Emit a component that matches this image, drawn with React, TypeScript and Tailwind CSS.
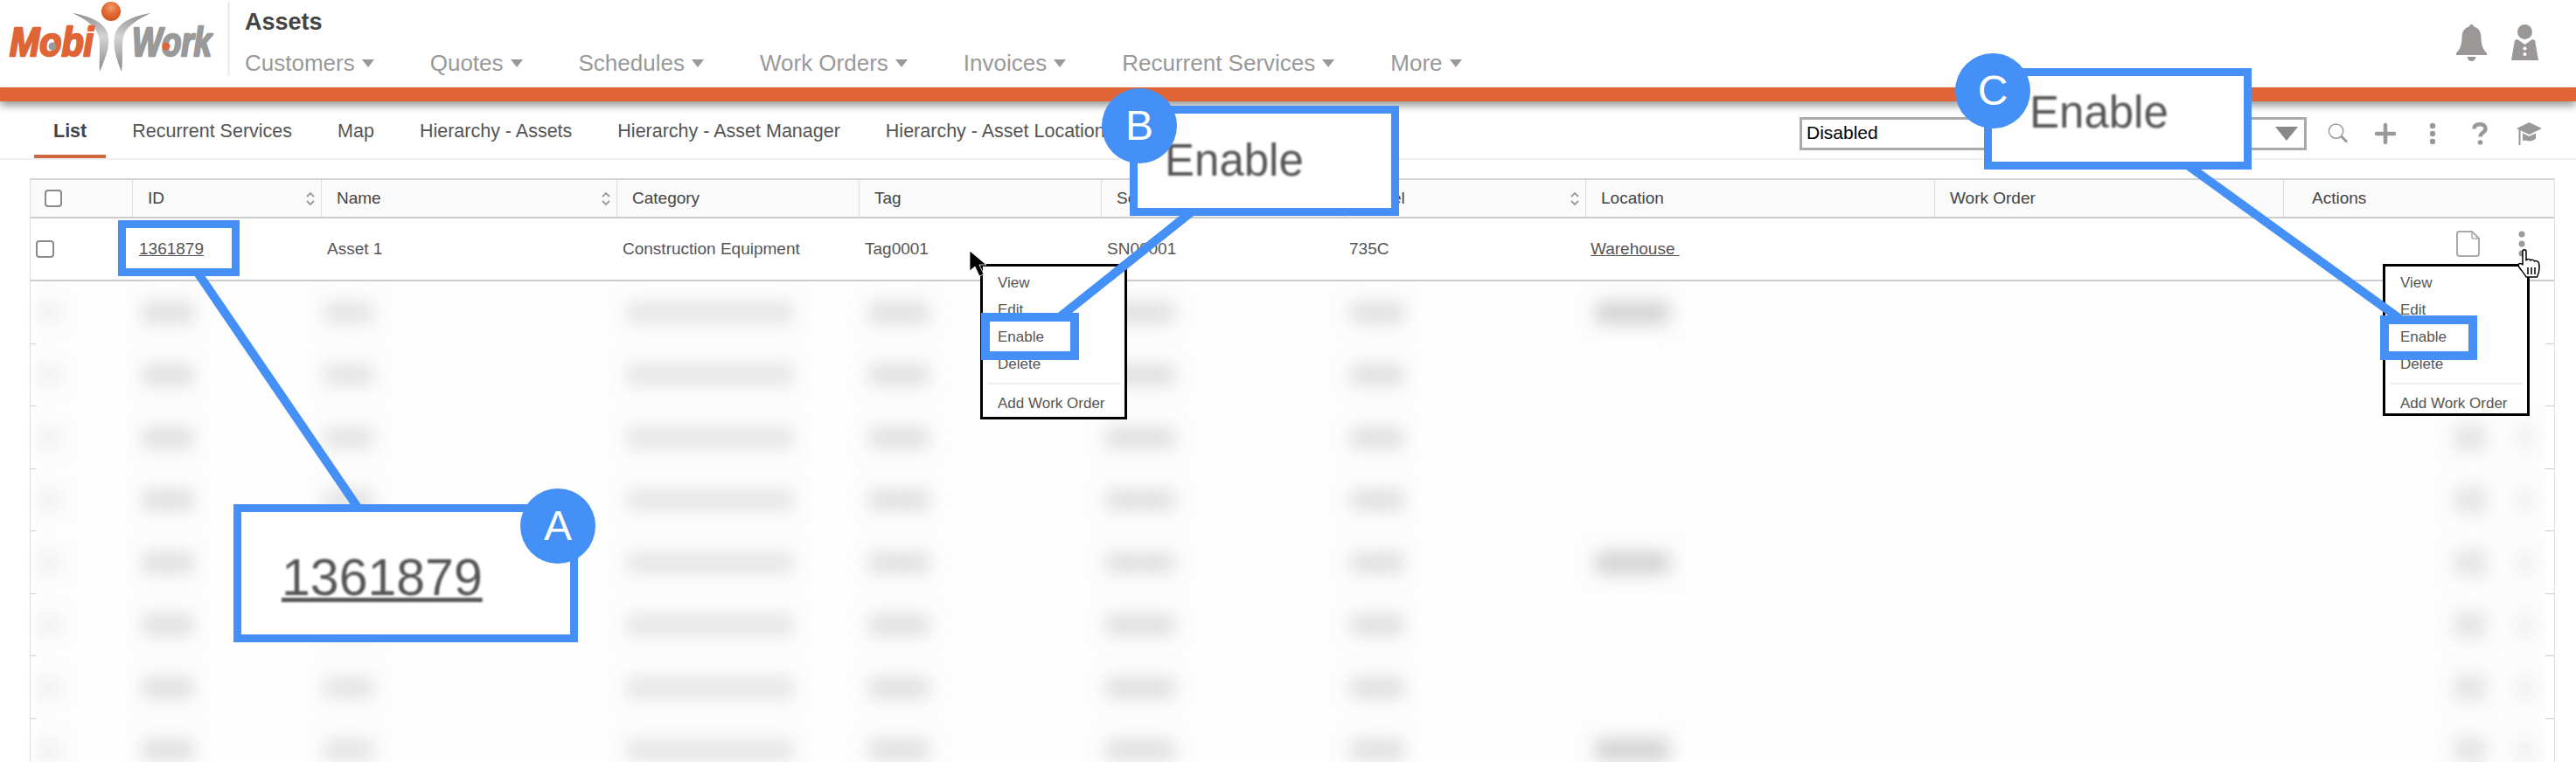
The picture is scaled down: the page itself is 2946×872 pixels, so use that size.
import { ReactNode } from "react";

const navItems = ["Customers", "Quotes", "Schedules", "Work Orders", "Invoices", "Recurrent Services", "More"];
const tabs = ["Recurrent Services", "Map", "Hierarchy - Assets", "Hierarchy - Asset Manager", "Hierarchy - Asset Location"];
const headers = [
  { label: "ID", sort: true },
  { label: "Name", sort: true },
  { label: "Category" },
  { label: "Tag" },
  { label: "Serial" },
  { label: "Model", sort: true },
  { label: "Location" },
  { label: "Work Order" },
];
// blurred rows below the first one
const blurRows = [
  { location: true, actions: false },
  { location: false, actions: false },
  { location: false, actions: true },
  { location: false, actions: true },
  { location: true, actions: true },
  { location: false, actions: true },
  { location: false, actions: true },
  { location: true, actions: true },
];
const menuItems = ["View", "Edit", "Enable", "Delete"];

function Logo() {
  return (
    <svg width="260" height="95" viewBox="0 0 260 95" className="shrink-0">
      <defs>
        <radialGradient id="ball" cx="0.5" cy="0.3" r="0.7">
          <stop offset="0" stopColor="#f29a6c" />
          <stop offset="0.55" stopColor="#e2672f" />
          <stop offset="1" stopColor="#cf5520" />
        </radialGradient>
        <linearGradient id="swoosh" x1="0" y1="0" x2="0" y2="1">
          <stop offset="0" stopColor="#8f8f8f" />
          <stop offset="0.4" stopColor="#d4d4d4" />
          <stop offset="1" stopColor="#8a8a8a" />
        </linearGradient>
      </defs>
      <path d="M83 15C100 18 118 24 123 38C127 52 120 68 114 82C113 66 115 50 113 42C110 30 98 22 83 15Z" fill="url(#swoosh)" />
      <path d="M172 15C155 18 137 24 132 38C128 52 133 68 139 82C141 66 139 50 141 42C144 30 158 22 172 15Z" fill="url(#swoosh)" />
      <circle cx="127" cy="13" r="11" fill="url(#ball)" />
      <text x="11" y="64" fontSize="46" fontWeight="700" fontStyle="italic" fill="#df6436" stroke="#df6436" strokeWidth="2.5" strokeLinejoin="round" textLength="96" lengthAdjust="spacingAndGlyphs">Mobi</text>
      <circle cx="60" cy="53" r="4.5" fill="#999" />
      <text x="151" y="64" fontSize="46" fontWeight="700" fontStyle="italic" fill="#999" stroke="#999" strokeWidth="2.5" strokeLinejoin="round" textLength="91" lengthAdjust="spacingAndGlyphs">Work</text>
      <circle cx="190" cy="53" r="4.5" fill="#df6436" />
    </svg>
  );
}

function Caret() {
  return <span className="ml-[8px] inline-block h-0 w-0 border-x-[7.5px] border-t-[9px] border-x-transparent border-t-[#999]" />;
}

function SortIcon() {
  return (
    <svg width="12" height="17" viewBox="0 0 12 17" fill="none" stroke="#999" strokeWidth="1.8">
      <path d="M2 6l4-4 4 4" />
      <path d="M2 11l4 4 4-4" />
    </svg>
  );
}

function Checkbox({ className }: { className: string }) {
  return <div className={`rounded-[4px] border-2 border-[#8a8a8a] bg-white ${className}`} />;
}

function Bell() {
  return (
    <svg width="35" height="42" viewBox="0 0 35 42" fill="#9b9797">
      <path d="M17.5 0c1.6 0 2.6 1 2.8 2.6C26 4 28.500 9 28.500 15c0 8 2 13 6.500 18v2H0v-2c4.500-5 6.500-10 6.500-18 0-6 2.500-11 8.200-12.400C14.900 1 15.900 0 17.500 0z" />
      <path d="M12.500 37h10c-.5 3-2.500 5-5 5s-4.500-2-5-5z" />
    </svg>
  );
}

function Person() {
  return (
    <svg width="31" height="41" viewBox="0 0 31 41" fill="#9b9797">
      <circle cx="15.500" cy="8.500" r="8.500" />
      <path d="M7 17l8.500 6L24 17l3 1 4 23H0l4-23z" />
      <circle cx="15.500" cy="27.500" r="2" fill="#fff" />
      <circle cx="15.500" cy="34" r="2" fill="#fff" />
    </svg>
  );
}

function ToolIcon({ width, children }: { width: string; children: ReactNode }) {
  return <div className={`flex h-[28px] items-center justify-center ${width}`}>{children}</div>;
}

function HeaderBar() {
  return (
    <header className="flex h-[100px] bg-white">
      <Logo />
      <div className="mt-[2px] h-[85px] w-[3px] bg-[#f0f0f0]" />
      <div className="pl-[17px]">
        <h1 className="mt-[10px] text-[27px] leading-[30px] font-bold text-[#444]">Assets</h1>
        <nav className="mt-[17px] flex gap-[64px]">
          {navItems.map((item) => (
            <div key={item} className="flex items-center text-[26px] leading-[30px] text-[#999]">
              {item}
              <Caret />
            </div>
          ))}
        </nav>
      </div>
      <div className="ml-auto flex gap-[28px] pt-[28px] pr-[43px]">
        <Bell />
        <Person />
      </div>
    </header>
  );
}

function TabBar() {
  return (
    <div className="flex h-[67px] border-b-2 border-[#eee] pl-[39px]">
      <div className="flex h-[65px] gap-[8px]">
        <div className="flex items-center border-b-4 border-[#d0663f] px-[22px] pt-[8px] text-[21.5px] font-bold text-[#444]">List</div>
        {tabs.map((tab) => (
          <div key={tab} className="flex items-center whitespace-nowrap border-b-4 border-transparent px-[22px] pt-[8px] text-[21.5px] text-[#555]">
            {tab}
          </div>
        ))}
      </div>
      <div className="ml-auto flex items-center gap-[30px] pt-[8px] pr-[39px]">
        <div className="mr-[-6px] flex h-[38px] w-[580px] items-center justify-between border-[3px] border-[#aaa] pr-[7px] pl-[5px] text-[21px] leading-none text-black">
          <span className="pb-[2px]">Disabled</span>
          <span className="h-0 w-0 border-x-[13px] border-t-[16px] border-x-transparent border-t-[#888]" />
        </div>
        <ToolIcon width="w-[24px]">
          <svg width="25" height="25" viewBox="0 0 25 25" fill="none" stroke="#999">
            <circle cx="10" cy="10" r="8.500" strokeWidth="1.5" />
            <path d="M16 16l7 7" strokeWidth="3" />
          </svg>
        </ToolIcon>
        <ToolIcon width="w-[24px]">
          <svg width="24" height="24" viewBox="0 0 24 24" fill="none" stroke="#999" strokeWidth="4.500" strokeLinecap="round">
            <path d="M12 2v20M2 12h20" />
          </svg>
        </ToolIcon>
        <ToolIcon width="w-[24px]">
          <svg width="8" height="26" viewBox="0 0 8 26" fill="#999">
            <circle cx="4" cy="4" r="3.200" />
            <circle cx="4" cy="13" r="3.200" />
            <circle cx="4" cy="22" r="3.200" />
          </svg>
        </ToolIcon>
        <ToolIcon width="w-[24px]">
          <svg width="18" height="26" viewBox="0 0 18 26" fill="none" stroke="#999" strokeWidth="4.500">
            <path d="M2.500 7.500C2.500 4 5 2.200 9 2.200s6.500 2.100 6.500 5c0 4.500-6 4.500-6 9.300" />
            <circle cx="9.500" cy="23" r="2.800" fill="#999" stroke="none" />
          </svg>
        </ToolIcon>
        <ToolIcon width="w-[29px]">
          <svg width="29" height="26" viewBox="0 0 29 26" fill="#999">
            <path d="M14.500 0L29 7l-14.500 7L0 7z" />
            <path d="M7 12.500l7.500 3.500 7.500-3.500v6c-2 2-4.500 3-7.500 3-1.500 0-3-.3-4.500-1l-3 .5z" />
            <path d="M2.500 8h2v18h-2z" />
          </svg>
        </ToolIcon>
      </div>
    </div>
  );
}

function TableHeader() {
  return (
    <div className="grid h-[46px] grid-cols-[116px_216px_338px_277px_277px_278px_276px_399px_399px_1fr] border-y-2 border-t-[#d4d4d4] border-b-[#ccc] bg-[#fafafa] text-[19px] text-[#444]">
      <div className="flex items-center pl-[16px]">
        <Checkbox className="h-[20px] w-[20px]" />
      </div>
      {headers.map((h) => (
        <div key={h.label} className="flex items-center justify-between border-l border-[#ddd] pr-[6px] pl-[17px]">
          {h.label}
          {h.sort && <SortIcon />}
        </div>
      ))}
      <div className="flex items-center border-l border-[#ddd] pl-[32px]">Actions</div>
    </div>
  );
}

function FirstRow() {
  return (
    <div className="grid h-[72px] grid-cols-[116px_216px_338px_277px_277px_278px_276px_399px_399px_1fr] items-center border-b-2 border-[#ccc] text-[19px] text-[#555]">
      <div className="pl-[6px]">
        <Checkbox className="h-[20px] w-[21px]" />
      </div>
      <div className="pl-[8px] underline">1361879</div>
      <div className="pl-[7px]">Asset 1</div>
      <div className="pl-[7px]">Construction Equipment</div>
      <div className="pl-[7px]">Tag0001</div>
      <div className="pl-[7px]">SN00001</div>
      <div className="pl-[6px]">735C</div>
      <div className="pl-[6px] whitespace-pre underline">Warehouse </div>
      <div />
      <div className="flex items-center pb-[13px] pl-[198px]">
        <svg width="27" height="30" viewBox="0 0 27 30" fill="none" stroke="#aaa" strokeWidth="2">
          <path d="M3 1h15l8 8v17a3 3 0 0 1-3 3H4a3 3 0 0 1-3-3V3a2 2 0 0 1 2-2z" />
          <path d="M18 1v6a2 2 0 0 0 2 2h6" strokeWidth="1.500" />
        </svg>
        <svg width="8" height="30" viewBox="0 0 8 30" fill="#999" className="ml-[44px]">
          <circle cx="4" cy="4" r="3.500" />
          <circle cx="4" cy="15" r="3.500" />
          <circle cx="4" cy="26" r="3.500" />
        </svg>
      </div>
    </div>
  );
}

function BlurRow({ location, actions }: { location: boolean; actions: boolean }) {
  return (
    <div className="flex h-[71.5px]">
      <div className="w-[6px] border-b border-[#ccc]" />
      <div className="grid flex-1 grid-cols-[110px_216px_338px_277px_277px_278px_276px_399px_399px_1fr] items-center bg-[#fdfdfd]">
        <div className="ml-[2px] h-[20px] w-[26px] bg-[#eeeeee] blur-[10px]" />
        <div className="ml-[12px] h-[22px] w-[58px] bg-[#dcdcdc] blur-[10px]" />
        <div className="ml-[4px] h-[22px] w-[56px] bg-[#e0e0e0] blur-[10px]" />
        <div className="ml-[12px] h-[22px] w-[190px] bg-[#e2e2e2] blur-[10px]" />
        <div className="ml-[12px] h-[22px] w-[68px] bg-[#dcdcdc] blur-[10px]" />
        <div className="ml-[6px] h-[22px] w-[78px] bg-[#dcdcdc] blur-[10px]" />
        <div className="ml-[8px] h-[22px] w-[60px] bg-[#dcdcdc] blur-[10px]" />
        <div>{location && <div className="ml-[12px] h-[24px] w-[84px] bg-[#cfcfcf] blur-[10px]" />}</div>
        <div />
        <div>
          {actions && (
            <div className="flex gap-[35px] pl-[196px]">
              <div className="h-[28px] w-[36px] bg-[#e2e2e2] blur-[10px]" />
              <div className="h-[28px] w-[20px] bg-[#eeeeee] blur-[10px]" />
            </div>
          )}
        </div>
      </div>
      <div className="w-[10px] border-b border-[#ccc]" />
    </div>
  );
}

function RowMenu({ className }: { className: string }) {
  return (
    <div className={`absolute w-[168px] border-[3px] border-black bg-white pt-[3px] text-[17px] text-[#555] ${className}`}>
      {menuItems.map((item) => (
        <div key={item} className="flex h-[31px] items-center pl-[17px]">
          {item}
        </div>
      ))}
      <div className="mx-[5px] my-[6px] h-[2px] bg-[#eee]" />
      <div className="flex h-[31px] items-center pl-[17px]">Add Work Order</div>
    </div>
  );
}

function Badge({ letter, className }: { letter: string; className: string }) {
  return (
    <div className={`absolute flex h-[86px] w-[86px] items-center justify-center rounded-full bg-[#4490f7] text-[48px] text-white ${className}`}>
      {letter}
    </div>
  );
}

export default function App() {
  return (
    <div className="relative h-[872px] w-[2946px] overflow-hidden bg-white [font-family:'Liberation_Sans',Arial,sans-serif]">
      <HeaderBar />
      <div className="relative h-[16px] bg-[#df6436] shadow-[0_5px_10px_rgba(0,0,0,0.4)]" />
      <TabBar />

      <div className="mt-[21px] mr-[24px] ml-[34px] border-x border-[#ddd]">
        <TableHeader />
        <FirstRow />
        {blurRows.map((row, i) => (
          <BlurRow key={i} location={row.location} actions={row.actions} />
        ))}
      </div>

      {/* Row menus */}
      <RowMenu className="top-[302px] left-[1121px] h-[178px]" />
      <RowMenu className="top-[302px] left-[2725px] h-[174px]" />

      {/* Cursors */}
      <svg width="22" height="32" viewBox="0 0 22 32" className="absolute top-[286px] left-[1108px]">
        <path d="M1 1v23l6-5 5 11 5-2-5-11h8z" fill="#000" stroke="#fff" strokeWidth="0.8" />
      </svg>
      <svg width="30" height="34" viewBox="0 0 30 34" className="absolute top-[285px] left-[2879px]" fill="#fff" stroke="#000" strokeWidth="1.500" strokeLinejoin="round">
        <path d="M6 3c0-3 4-3 4 0v10c1-2 4-2 5 0 1-1 4-1 4.500 1 1.500-1 4.500 0 5 2 1 5 1 10-2 16H10C8 28 4 24 1.500 20c-1.500-3 1.500-5 4.500-2z" />
        <path d="M12 21v8M16 21v8M20 21v8" />
      </svg>

      {/* Callout connectors */}
      <svg width="2946" height="872" viewBox="0 0 2946 872" className="pointer-events-none absolute top-0 left-0" stroke="#4490f7" strokeWidth="10">
        <line x1="226" y1="312" x2="410" y2="582" />
        <line x1="1362" y1="243" x2="1213" y2="362" />
        <line x1="2503" y1="190" x2="2745" y2="365" />
      </svg>

      {/* Highlight boxes */}
      <div className="absolute top-[252px] left-[135px] h-[64px] w-[139px] border-[9px] border-[#4490f7]" />
      <div className="absolute top-[358px] left-[1122px] h-[54px] w-[112px] border-[10px] border-[#4490f7]" />
      <div className="absolute top-[361px] left-[2722px] h-[51px] w-[111px] border-[10px] border-[#4490f7]" />

      <div className="absolute top-[577px] left-[267px] flex h-[158px] w-[394px] items-center border-[9px] border-[#4490f7] bg-white pt-[10px] pl-[46px] text-[59px] text-[#555] underline">
        <span className="blur-[1px]">1361879</span>
      </div>
      <div className="absolute top-[121px] left-[1292px] flex h-[126px] w-[308px] items-center border-[9px] border-[#4490f7] bg-white pl-[31px] text-[51px] text-[#555]">
        <span className="blur-[1px]">Enable</span>
      </div>
      <div className="absolute top-[78px] left-[2269px] flex h-[116px] w-[306px] items-center border-[9px] border-[#4490f7] bg-white pb-[14px] pl-[43px] text-[51px] text-[#555]">
        <span className="blur-[1px]">Enable</span>
      </div>

      <Badge letter="A" className="top-[559px] left-[595px]" />
      <Badge letter="B" className="top-[101px] left-[1260px]" />
      <Badge letter="C" className="top-[61px] left-[2236px]" />
    </div>
  );
}
